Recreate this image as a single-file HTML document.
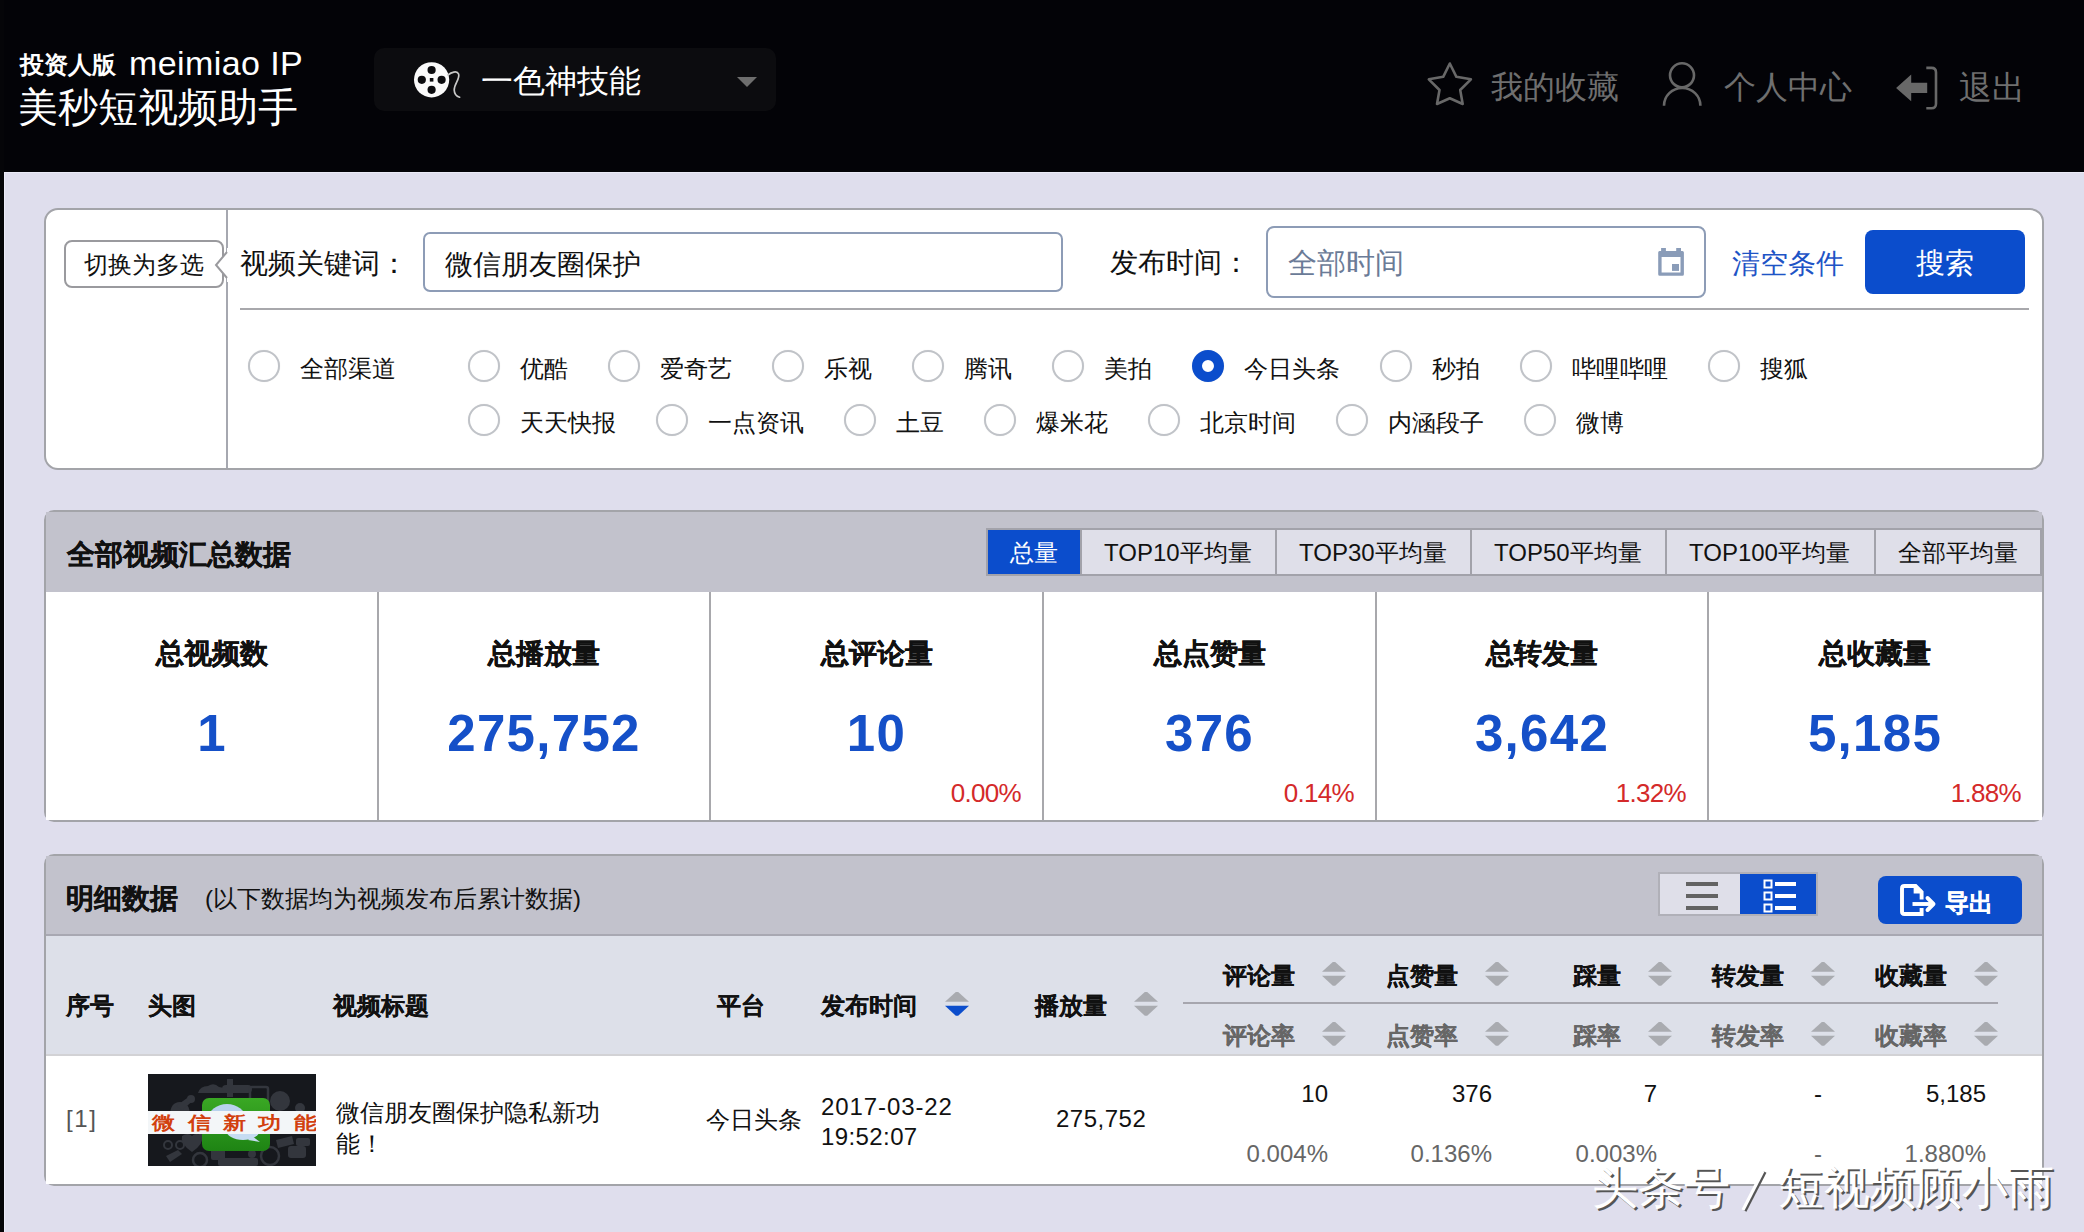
<!DOCTYPE html>
<html><head><meta charset="utf-8">
<style>
html,body{margin:0;padding:0;}
body{width:2084px;height:1232px;overflow:hidden;position:relative;background:#dfdeed;font-family:"Liberation Sans",sans-serif;color:#111;}
.a{position:absolute;white-space:nowrap;line-height:1;}
.hdr{position:absolute;left:0;top:0;width:2084px;height:172px;background:#030307;}
.strip{position:absolute;left:0;top:0;width:4px;height:1232px;background:#050508;}
.panel{position:absolute;box-sizing:border-box;border:2px solid #a3a4a9;background:#fff;}
.radio{position:absolute;width:32px;height:32px;box-sizing:border-box;border:2px solid #c0c3c8;border-radius:50%;background:#fff;box-shadow:0 0 1px rgba(0,0,0,0.12);}
.radio.on{border:10px solid #0b4dcc;}
.rt{position:absolute;font-size:24.4px;line-height:1;white-space:nowrap;}
.b{font-weight:bold;-webkit-text-stroke:0.3px currentColor;}
.num{-webkit-text-stroke:0;}
.th{-webkit-text-stroke:0.1px currentColor;}
.sort{position:absolute;width:24px;height:24px;}
</style></head>
<body>
<div class="hdr"></div>
<div class="strip"></div>
<div style="position:absolute;left:4px;top:172px;width:2080px;height:1px;background:#ebebf7;"></div>
<div style="position:absolute;left:4px;top:172px;width:1px;height:1060px;background:#ebebf7;"></div>

<!-- header left -->
<div class="a b" id="t1" style="left:20px;top:53px;font-size:24px;color:#fff;-webkit-text-stroke:0;">投资人版</div>
<div class="a" id="t2" style="left:129px;top:46px;font-size:34px;letter-spacing:0.4px;color:#fff;">meimiao IP</div>
<div class="a" id="t3" style="left:18px;top:87px;font-size:40px;color:#fff;">美秒短视频助手</div>

<!-- dropdown -->
<div style="position:absolute;left:374px;top:48px;width:402px;height:63px;background:#0c0c0f;border-radius:10px;"></div>
<svg style="position:absolute;left:405px;top:55px" width="65" height="50" viewBox="0 0 65 50">
  <circle cx="26.6" cy="24.8" r="17.6" fill="#fafafa"/>
  <circle cx="26.6" cy="15" r="4.1" fill="#0c0c0f"/>
  <circle cx="26.6" cy="34.8" r="4.1" fill="#0c0c0f"/>
  <circle cx="16.8" cy="24.8" r="4.1" fill="#0c0c0f"/>
  <circle cx="36.6" cy="24.8" r="4.1" fill="#0c0c0f"/>
  <rect x="24.8" y="23" width="3.6" height="3.6" fill="#0c0c0f"/>
  <path d="M43 20 C46 17.5 52 15 53.6 19 C55.2 24 49 29 49.2 35 C49.4 39 52 41.5 54.6 42.2" stroke="#c8c8c8" stroke-width="1.7" fill="none" stroke-linecap="round"/>
</svg>
<div class="a" id="t4" style="left:481px;top:65px;font-size:32px;color:#fff;">一色神技能</div>
<div style="position:absolute;left:737px;top:77px;width:0;height:0;border-left:10px solid transparent;border-right:10px solid transparent;border-top:10px solid #6e6e6e;"></div>

<!-- header right -->
<svg style="position:absolute;left:1422px;top:58px" width="56" height="52" viewBox="0 0 56 52">
  <path d="M27.8 5.5 L34.4 18.8 L48.9 21.3 L38.2 32 L40.7 46 L27.8 40.3 L15 46 L17.5 32 L6.8 21.3 L21.2 18.8 Z" fill="none" stroke="#686868" stroke-width="2.6" stroke-linejoin="round"/>
</svg>
<div class="a" id="t5" style="left:1491px;top:71px;font-size:32.4px;color:#6f6f6f;">我的收藏</div>
<svg style="position:absolute;left:1655px;top:58px" width="56" height="52" viewBox="0 0 56 52">
  <circle cx="27" cy="17.3" r="12" fill="none" stroke="#686868" stroke-width="2.6"/>
  <path d="M9 47.7 A18.2 17.7 0 0 1 45.4 47.7" fill="none" stroke="#686868" stroke-width="2.6"/>
</svg>
<div class="a" id="t6" style="left:1724px;top:71px;font-size:32.4px;color:#6f6f6f;">个人中心</div>
<svg style="position:absolute;left:1888px;top:60px" width="56" height="54" viewBox="0 0 56 54">
  <path d="M8.1 28 L23.2 14.5 L23.2 22.8 L39.2 22.8 L39.2 32.9 L23.2 32.9 L23.2 41.2 Z" fill="#686868"/>
  <path d="M38.3 7.9 H43.5 Q48 7.9 48 12.4 V43.7 Q48 48.2 43.5 48.2 H38.3" fill="none" stroke="#686868" stroke-width="2.6"/>
</svg>
<div class="a" id="t7" style="left:1959px;top:71px;font-size:33px;color:#6f6f6f;">退出</div>

<!-- search panel -->
<div class="panel" style="left:44px;top:208px;width:2000px;height:262px;border-radius:14px;"></div>
<div style="position:absolute;left:226px;top:210px;width:2px;height:258px;background:#a6a8b0;"></div>
<div style="position:absolute;left:64px;top:240px;width:160px;height:48px;box-sizing:border-box;border:2px solid #9a9a9e;border-radius:8px;background:#fff;"></div>
<svg style="position:absolute;left:212px;top:248px" width="20" height="34" viewBox="0 0 20 34">
  <path d="M15 0 L15 4 L4 17 L15 30 L15 34 L20 34 L20 0 Z" fill="#fff"/>
  <path d="M15 4 L4 17 L15 30" fill="none" stroke="#9a9a9e" stroke-width="2"/>
</svg>
<div class="a" id="t8" style="left:84px;top:253px;font-size:24px;">切换为多选</div>
<div class="a" id="t9" style="left:240px;top:250px;font-size:28px;">视频关键词：</div>
<div style="position:absolute;left:423px;top:232px;width:640px;height:60px;box-sizing:border-box;border:2px solid #8d9cb6;border-radius:7px;background:#fff;"></div>
<div class="a" id="t10" style="left:445px;top:251px;font-size:28px;">微信朋友圈保护</div>
<div class="a" id="t11" style="left:1110px;top:249px;font-size:28px;">发布时间：</div>
<div style="position:absolute;left:1266px;top:226px;width:440px;height:72px;box-sizing:border-box;border:2px solid #8d9cb6;border-radius:8px;background:#fff;"></div>
<div class="a" id="t12" style="left:1288px;top:249px;font-size:28.6px;color:#6b7b97;">全部时间</div>
<svg style="position:absolute;left:1658px;top:247px" width="26" height="30" viewBox="0 0 26 30">
  <rect x="3.1" y="1" width="4.8" height="4" fill="#8a9cb8"/>
  <rect x="18.2" y="1" width="4.8" height="4" fill="#8a9cb8"/>
  <path d="M1.5 3.9 H24.4 Q25.9 3.9 25.9 5.4 V27.3 Q25.9 28.8 24.4 28.8 H1.7 Q0.2 28.8 0.2 27.3 V5.4 Q0.2 3.9 1.5 3.9 Z M3.6 9.9 V25.4 H22.5 V9.9 Z" fill="#8a9cb8" fill-rule="evenodd"/>
  <rect x="14" y="17" width="7" height="6.9" fill="#8a9cb8"/>
</svg>
<div class="a" id="t13" style="left:1732px;top:249px;font-size:28.4px;color:#1e54c6;">清空条件</div>
<div style="position:absolute;left:1865px;top:230px;width:160px;height:64px;background:#0b4dcc;border-radius:8px;"></div>
<div class="a" id="t14" style="left:1916px;top:249px;font-size:28.6px;color:#fff;">搜索</div>
<div style="position:absolute;left:240px;top:308px;width:1789px;height:2px;background:#a8a8ac;"></div>

<!-- radios row 1 -->
<div class="radio" style="left:248px;top:350px;"></div><div class="rt" style="left:300px;top:357px;">全部渠道</div>
<div class="radio" style="left:468px;top:350px;"></div><div class="rt" style="left:520px;top:357px;">优酷</div>
<div class="radio" style="left:608px;top:350px;"></div><div class="rt" style="left:660px;top:357px;">爱奇艺</div>
<div class="radio" style="left:772px;top:350px;"></div><div class="rt" style="left:824px;top:357px;">乐视</div>
<div class="radio" style="left:912px;top:350px;"></div><div class="rt" style="left:964px;top:357px;">腾讯</div>
<div class="radio" style="left:1052px;top:350px;"></div><div class="rt" style="left:1104px;top:357px;">美拍</div>
<div class="radio on" style="left:1192px;top:350px;"></div><div class="rt" style="left:1244px;top:357px;">今日头条</div>
<div class="radio" style="left:1380px;top:350px;"></div><div class="rt" style="left:1432px;top:357px;">秒拍</div>
<div class="radio" style="left:1520px;top:350px;"></div><div class="rt" style="left:1572px;top:357px;">哔哩哔哩</div>
<div class="radio" style="left:1708px;top:350px;"></div><div class="rt" style="left:1760px;top:357px;">搜狐</div>
<!-- radios row 2 -->
<div class="radio" style="left:468px;top:404px;"></div><div class="rt" style="left:520px;top:411px;">天天快报</div>
<div class="radio" style="left:656px;top:404px;"></div><div class="rt" style="left:708px;top:411px;">一点资讯</div>
<div class="radio" style="left:844px;top:404px;"></div><div class="rt" style="left:896px;top:411px;">土豆</div>
<div class="radio" style="left:984px;top:404px;"></div><div class="rt" style="left:1036px;top:411px;">爆米花</div>
<div class="radio" style="left:1148px;top:404px;"></div><div class="rt" style="left:1200px;top:411px;">北京时间</div>
<div class="radio" style="left:1336px;top:404px;"></div><div class="rt" style="left:1388px;top:411px;">内涵段子</div>
<div class="radio" style="left:1524px;top:404px;"></div><div class="rt" style="left:1576px;top:411px;">微博</div>


<!-- summary panel -->
<div class="panel" style="left:44px;top:510px;width:2000px;height:312px;border-radius:10px;background:transparent;"></div>
<div style="position:absolute;left:46px;top:512px;width:1996px;height:308px;background:#fff;">
  <div style="position:absolute;left:0;top:0;width:1996px;height:80px;background:#c2c2cc;"></div>
</div>
<div class="a b" id="s1" style="left:67px;top:541px;font-size:28px;">全部视频汇总数据</div>
<!-- tabs -->
<div style="position:absolute;left:986px;top:528px;width:1056px;height:48px;box-sizing:border-box;border:2px solid #a2a2aa;background:#dfdfe9;"></div>
<div style="position:absolute;left:988px;top:530px;width:92px;height:44px;background:#0b4dcc;"></div>
<div style="position:absolute;left:1080px;top:530px;width:2px;height:44px;background:#a2a2aa;"></div>
<div style="position:absolute;left:1275px;top:530px;width:2px;height:44px;background:#a2a2aa;"></div>
<div style="position:absolute;left:1470px;top:530px;width:2px;height:44px;background:#a2a2aa;"></div>
<div style="position:absolute;left:1665px;top:530px;width:2px;height:44px;background:#a2a2aa;"></div>
<div style="position:absolute;left:1874px;top:530px;width:2px;height:44px;background:#a2a2aa;"></div>
<div class="a" id="tb1" style="left:1010px;top:541px;font-size:24px;color:#fff;">总量</div>
<div class="a" id="tb2" style="left:1104px;top:541px;font-size:24px;">TOP10平均量</div>
<div class="a" id="tb3" style="left:1299px;top:541px;font-size:24px;">TOP30平均量</div>
<div class="a" id="tb4" style="left:1494px;top:541px;font-size:24px;">TOP50平均量</div>
<div class="a" id="tb5" style="left:1689px;top:541px;font-size:24px;">TOP100平均量</div>
<div class="a" id="tb6" style="left:1898px;top:541px;font-size:24px;">全部平均量</div>
<!-- cells -->
<div style="position:absolute;left:377px;top:592px;width:2px;height:228px;background:#a8a8ac;"></div>
<div style="position:absolute;left:709px;top:592px;width:2px;height:228px;background:#a8a8ac;"></div>
<div style="position:absolute;left:1042px;top:592px;width:2px;height:228px;background:#a8a8ac;"></div>
<div style="position:absolute;left:1375px;top:592px;width:2px;height:228px;background:#a8a8ac;"></div>
<div style="position:absolute;left:1707px;top:592px;width:2px;height:228px;background:#a8a8ac;"></div>
<div class="a b" style="left:46px;width:332px;text-align:center;top:640px;font-size:28px;">总视频数</div>
<div class="a b" style="left:378px;width:332px;text-align:center;top:640px;font-size:28px;">总播放量</div>
<div class="a b" style="left:710px;width:333px;text-align:center;top:640px;font-size:28px;">总评论量</div>
<div class="a b" style="left:1043px;width:333px;text-align:center;top:640px;font-size:28px;">总点赞量</div>
<div class="a b" style="left:1376px;width:332px;text-align:center;top:640px;font-size:28px;">总转发量</div>
<div class="a b" style="left:1708px;width:334px;text-align:center;top:640px;font-size:28px;">总收藏量</div>
<div class="a b num" style="left:46px;width:332px;text-align:center;top:708px;font-size:51px;color:#1550c8;letter-spacing:1.3px;">1</div>
<div class="a b num" style="left:378px;width:332px;text-align:center;top:708px;font-size:51px;color:#1550c8;letter-spacing:1.3px;">275,752</div>
<div class="a b num" style="left:710px;width:333px;text-align:center;top:708px;font-size:51px;color:#1550c8;letter-spacing:1.3px;">10</div>
<div class="a b num" style="left:1043px;width:333px;text-align:center;top:708px;font-size:51px;color:#1550c8;letter-spacing:1.3px;">376</div>
<div class="a b num" style="left:1376px;width:332px;text-align:center;top:708px;font-size:51px;color:#1550c8;letter-spacing:1.3px;">3,642</div>
<div class="a b num" style="left:1708px;width:334px;text-align:center;top:708px;font-size:51px;color:#1550c8;letter-spacing:1.3px;">5,185</div>
<div class="a pct" style="left:710px;width:311px;text-align:right;top:780px;font-size:26px;color:#d42a2a;letter-spacing:-0.7px;">0.00%</div>
<div class="a pct" style="left:1043px;width:311px;text-align:right;top:780px;font-size:26px;color:#d42a2a;letter-spacing:-0.7px;">0.14%</div>
<div class="a pct" style="left:1376px;width:310px;text-align:right;top:780px;font-size:26px;color:#d42a2a;letter-spacing:-0.7px;">1.32%</div>
<div class="a pct" style="left:1708px;width:313px;text-align:right;top:780px;font-size:26px;color:#d42a2a;letter-spacing:-0.7px;">1.88%</div>

<!-- detail panel -->
<div class="panel" style="left:44px;top:854px;width:2000px;height:332px;border-radius:10px;background:transparent;"></div>
<div style="position:absolute;left:46px;top:856px;width:1996px;height:328px;background:#fff;">
  <div style="position:absolute;left:0;top:0;width:1996px;height:78px;background:#c2c2cc;"></div>
  <div style="position:absolute;left:0;top:78px;width:1996px;height:2px;background:#a8a8b2;"></div>
  <div style="position:absolute;left:0;top:80px;width:1996px;height:118px;background:#dde0e9;"></div>
  <div style="position:absolute;left:0;top:198px;width:1996px;height:2px;background:#d2d2d5;"></div>
</div>
<div class="a b" id="d1" style="left:66px;top:885px;font-size:28px;">明细数据</div>
<div class="a" id="d2" style="left:205px;top:887px;font-size:24px;">(以下数据均为视频发布后累计数据)</div>
<!-- toggle -->
<div style="position:absolute;left:1658px;top:872px;width:160px;height:44px;box-sizing:border-box;border:2px solid #b0b0b8;background:#dfdfe9;"></div>
<div style="position:absolute;left:1740px;top:874px;width:76px;height:40px;background:#0b4dcc;"></div>
<div style="position:absolute;left:1686px;top:882px;width:32px;height:4px;background:#636363;"></div>
<div style="position:absolute;left:1686px;top:894px;width:32px;height:4px;background:#636363;"></div>
<div style="position:absolute;left:1686px;top:906px;width:32px;height:4px;background:#636363;"></div>
<svg style="position:absolute;left:1760px;top:878px" width="40" height="36" viewBox="0 0 40 36">
  <rect x="4.5" y="2.5" width="7" height="7" fill="none" stroke="#fff" stroke-width="2"/>
  <rect x="4.5" y="14.5" width="7" height="7" fill="none" stroke="#fff" stroke-width="2"/>
  <rect x="4.5" y="26.5" width="7" height="7" fill="none" stroke="#fff" stroke-width="2"/>
  <rect x="15" y="4" width="21" height="4" fill="#fff"/>
  <rect x="15" y="16" width="21" height="4" fill="#fff"/>
  <rect x="15" y="28" width="21" height="4" fill="#fff"/>
</svg>
<!-- export -->
<div style="position:absolute;left:1878px;top:876px;width:144px;height:48px;background:#0b4dcc;border-radius:8px;"></div>
<svg style="position:absolute;left:1890px;top:876px" width="60" height="48" viewBox="0 0 60 48">
  <path d="M31.6 23.5 V16 L25.6 10 H14.5 Q12 10 12 12.5 V35.5 Q12 38 14.5 38 H31.6 V32" fill="none" stroke="#fff" stroke-width="3.9"/>
  <path d="M25.6 10 V15.5 H31.6" fill="none" stroke="#fff" stroke-width="3.9"/>
  <path d="M22.5 28 H43" fill="none" stroke="#fff" stroke-width="3.9"/>
  <path d="M37.5 22 L43.5 28 L37.5 34" fill="none" stroke="#fff" stroke-width="3.9" stroke-linecap="round" stroke-linejoin="round"/>
</svg>
<div class="a b" id="d3" style="left:1945px;top:891px;font-size:24px;color:#fff;">导出</div>

<!-- table header -->
<div class="a b th" style="left:66px;top:994px;font-size:24px;">序号</div>
<div class="a b th" style="left:148px;top:994px;font-size:24px;">头图</div>
<div class="a b th" style="left:333px;top:994px;font-size:24px;">视频标题</div>
<div class="a b th" style="left:717px;top:994px;font-size:24px;">平台</div>
<div class="a b th" style="left:821px;top:994px;font-size:24px;">发布时间</div>
<div class="a b th" style="left:1035px;top:994px;font-size:24px;">播放量</div>
<div style="position:absolute;left:1183px;top:1002px;width:815px;height:2px;background:#a6a6ae;"></div>
<div class="a b th" style="left:1223px;top:964px;font-size:24px;">评论量</div>
<div class="a b th" style="left:1386px;top:964px;font-size:24px;">点赞量</div>
<div class="a b th" style="left:1573px;top:964px;font-size:24px;">踩量</div>
<div class="a b th" style="left:1712px;top:964px;font-size:24px;">转发量</div>
<div class="a b th" style="left:1875px;top:964px;font-size:24px;">收藏量</div>
<div class="a b th" style="left:1223px;top:1024px;font-size:24px;color:#666;">评论率</div>
<div class="a b th" style="left:1386px;top:1024px;font-size:24px;color:#666;">点赞率</div>
<div class="a b th" style="left:1573px;top:1024px;font-size:24px;color:#666;">踩率</div>
<div class="a b th" style="left:1712px;top:1024px;font-size:24px;color:#666;">转发率</div>
<div class="a b th" style="left:1875px;top:1024px;font-size:24px;color:#666;">收藏率</div>
<svg class="sort" style="left:945px;top:992px" viewBox="0 0 24 24"><path d="M10.8 0 H13.2 L24 9.8 H0 Z" fill="#a9abb0"/><path d="M0 13.8 H24 L13.2 23.8 H10.8 Z" fill="#0b4dcc"/></svg>
<svg class="sort" style="left:1134px;top:992px" viewBox="0 0 24 24"><path d="M10.8 0 H13.2 L24 9.8 H0 Z" fill="#a9abb0"/><path d="M0 13.8 H24 L13.2 23.8 H10.8 Z" fill="#a9abb0"/></svg>
<svg class="sort" style="left:1322px;top:962px" viewBox="0 0 24 24"><path d="M10.8 0 H13.2 L24 9.8 H0 Z" fill="#a9abb0"/><path d="M0 13.8 H24 L13.2 23.8 H10.8 Z" fill="#a9abb0"/></svg>
<svg class="sort" style="left:1322px;top:1022px" viewBox="0 0 24 24"><path d="M10.8 0 H13.2 L24 9.8 H0 Z" fill="#a9abb0"/><path d="M0 13.8 H24 L13.2 23.8 H10.8 Z" fill="#a9abb0"/></svg>
<svg class="sort" style="left:1485px;top:962px" viewBox="0 0 24 24"><path d="M10.8 0 H13.2 L24 9.8 H0 Z" fill="#a9abb0"/><path d="M0 13.8 H24 L13.2 23.8 H10.8 Z" fill="#a9abb0"/></svg>
<svg class="sort" style="left:1485px;top:1022px" viewBox="0 0 24 24"><path d="M10.8 0 H13.2 L24 9.8 H0 Z" fill="#a9abb0"/><path d="M0 13.8 H24 L13.2 23.8 H10.8 Z" fill="#a9abb0"/></svg>
<svg class="sort" style="left:1648px;top:962px" viewBox="0 0 24 24"><path d="M10.8 0 H13.2 L24 9.8 H0 Z" fill="#a9abb0"/><path d="M0 13.8 H24 L13.2 23.8 H10.8 Z" fill="#a9abb0"/></svg>
<svg class="sort" style="left:1648px;top:1022px" viewBox="0 0 24 24"><path d="M10.8 0 H13.2 L24 9.8 H0 Z" fill="#a9abb0"/><path d="M0 13.8 H24 L13.2 23.8 H10.8 Z" fill="#a9abb0"/></svg>
<svg class="sort" style="left:1811px;top:962px" viewBox="0 0 24 24"><path d="M10.8 0 H13.2 L24 9.8 H0 Z" fill="#a9abb0"/><path d="M0 13.8 H24 L13.2 23.8 H10.8 Z" fill="#a9abb0"/></svg>
<svg class="sort" style="left:1811px;top:1022px" viewBox="0 0 24 24"><path d="M10.8 0 H13.2 L24 9.8 H0 Z" fill="#a9abb0"/><path d="M0 13.8 H24 L13.2 23.8 H10.8 Z" fill="#a9abb0"/></svg>
<svg class="sort" style="left:1974px;top:962px" viewBox="0 0 24 24"><path d="M10.8 0 H13.2 L24 9.8 H0 Z" fill="#a9abb0"/><path d="M0 13.8 H24 L13.2 23.8 H10.8 Z" fill="#a9abb0"/></svg>
<svg class="sort" style="left:1974px;top:1022px" viewBox="0 0 24 24"><path d="M10.8 0 H13.2 L24 9.8 H0 Z" fill="#a9abb0"/><path d="M0 13.8 H24 L13.2 23.8 H10.8 Z" fill="#a9abb0"/></svg>

<!-- data row -->
<div class="a" id="r1" style="left:66px;top:1107px;font-size:24px;letter-spacing:1.6px;color:#555;">[1]</div>
<svg style="position:absolute;left:148px;top:1074px" width="168" height="92" viewBox="0 0 168 92">
  <defs><linearGradient id="gg" x1="0" y1="0" x2="0" y2="1"><stop offset="0" stop-color="#3aa824"/><stop offset="1" stop-color="#1e8414"/></linearGradient></defs>
  <rect width="168" height="92" fill="#16181d"/>
  <g fill="#33363d">
    <path d="M50 19 Q52 12 60 12 Q66 8 71 13 Q77 13 77 19 Z"/>
    <rect x="74" y="11" width="30" height="8" rx="4"/><rect x="79" y="5" width="6" height="18"/>
    <rect x="102" y="13" width="18" height="17" rx="2" fill="none" stroke="#33363d" stroke-width="2.5"/>
    <circle cx="132" cy="27" r="10"/><circle cx="152" cy="34" r="5"/>
    <path d="M22 42 Q22 28 32 28 Q42 28 42 42 Z"/><path d="M28 32 L42 22 L46 26 L34 36 Z"/>
    <circle cx="43" cy="25" r="4"/>
    <circle cx="20" cy="71" r="4" fill="none" stroke="#33363d" stroke-width="2"/><circle cx="32" cy="71" r="4" fill="none" stroke="#33363d" stroke-width="2"/>
    <path d="M34 62 Q40 58 44 62 Q48 58 54 62 Q56 70 44 78 Q32 70 34 62 Z"/>
    <path d="M18 82 L30 76 L34 80 L22 88 Z"/>
    <circle cx="52" cy="86" r="7" fill="none" stroke="#33363d" stroke-width="2.5"/>
    <rect x="63" y="74" width="14" height="12" rx="2"/>
    <rect x="70" y="84" width="40" height="8" rx="2"/>
    <circle cx="122" cy="82" r="9" fill="none" stroke="#33363d" stroke-width="2.5"/><circle cx="104" cy="80" r="4"/>
    <path d="M128 66 L144 62 L146 70 L130 74 Z"/><rect x="140" y="72" width="18" height="12" rx="3"/>
    <rect x="148" y="64" width="14" height="8" rx="2"/><circle cx="156" cy="46" r="5"/>
    <path d="M50 58 L62 52 L64 60 L52 66 Z"/>
  </g>
  <rect x="54" y="24" width="68" height="53" rx="7" fill="url(#gg)"/>
  <ellipse cx="79" cy="45" rx="19" ry="15" fill="#b9d2ee"/>
  <ellipse cx="95" cy="56" rx="17" ry="10" fill="#c6dcf2"/>
  <path d="M104 62 L112 68 L100 66 Z" fill="#c6dcf2"/>
  <rect x="0" y="37" width="168" height="23" fill="#f3f6f8"/>
  <g font-family="Liberation Sans, sans-serif" font-weight="bold" fill="#d2400e" transform="scale(1,0.78)">
    <text x="4" y="70" font-size="22.5">微</text>
    <text x="40" y="70" font-size="22.5">信</text>
    <text x="75.5" y="70" font-size="22.5">新</text>
    <text x="110.5" y="70" font-size="22.5">功</text>
    <text x="146" y="70" font-size="22.5">能</text>
  </g>
</svg>
<div class="a" id="r2" style="left:336px;top:1097px;font-size:24px;line-height:31px;">微信朋友圈保护隐私新功<br>能！</div>
<div class="a" id="r3" style="left:706px;top:1108px;font-size:24px;">今日头条</div>
<div class="a" id="r4" style="left:821px;top:1092px;font-size:24px;line-height:30px;"><span style="letter-spacing:0.9px">2017-03-22</span><br><span style="letter-spacing:0.4px">19:52:07</span></div>
<div class="a" id="r5" style="left:1056px;top:1107px;font-size:24px;letter-spacing:0.5px;">275,752</div>
<div class="a rv" style="left:1128px;width:200px;text-align:right;top:1082px;font-size:24px;">10</div>
<div class="a rv" style="left:1292px;width:200px;text-align:right;top:1082px;font-size:24px;">376</div>
<div class="a rv" style="left:1457px;width:200px;text-align:right;top:1082px;font-size:24px;">7</div>
<div class="a rv" style="left:1622px;width:200px;text-align:right;top:1082px;font-size:24px;">-</div>
<div class="a rv" style="left:1786px;width:200px;text-align:right;top:1082px;font-size:24px;">5,185</div>
<div class="a rp" style="left:1128px;width:200px;text-align:right;top:1142px;font-size:24px;color:#666;">0.004%</div>
<div class="a rp" style="left:1292px;width:200px;text-align:right;top:1142px;font-size:24px;color:#666;">0.136%</div>
<div class="a rp" style="left:1457px;width:200px;text-align:right;top:1142px;font-size:24px;color:#666;">0.003%</div>
<div class="a rp" style="left:1622px;width:200px;text-align:right;top:1142px;font-size:24px;color:#666;">-</div>
<div class="a rp" style="left:1786px;width:200px;text-align:right;top:1142px;font-size:24px;color:#666;">1.880%</div>

<!-- watermark -->
<div class="a" id="wm1" style="left:1592px;top:1164px;font-size:46px;color:#fff;text-shadow:2px 2px 0 #555;">头条号</div>
<svg style="position:absolute;left:1736px;top:1166px" width="40" height="50" viewBox="0 0 40 50"><path d="M9 45 L29 6" stroke="#555" stroke-width="3.2"/><path d="M7 44 L27 5" stroke="#fff" stroke-width="3.2"/></svg>
<div class="a" id="wm2" style="left:1778px;top:1164px;font-size:46px;color:#fff;text-shadow:2px 2px 0 #555;">短视频顾小雨</div>

</body></html>
